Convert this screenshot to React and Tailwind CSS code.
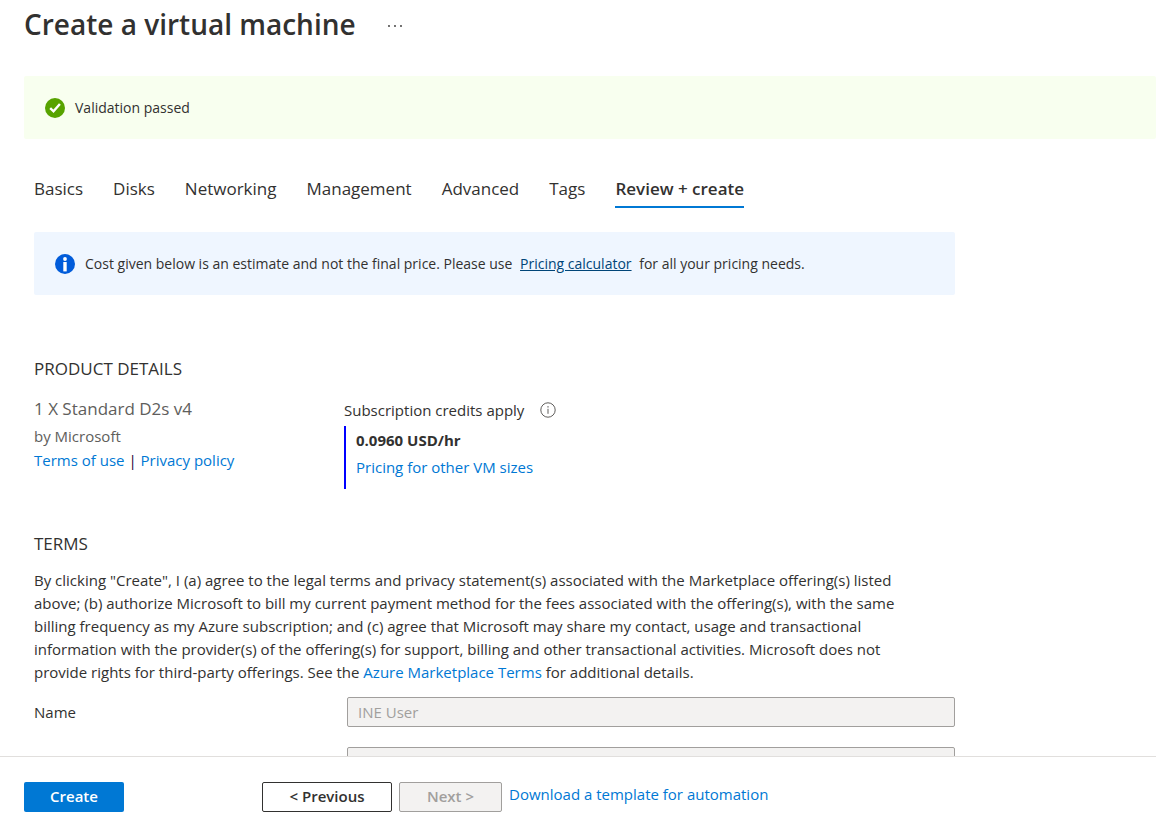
const tabs = ["Basics", "Disks", "Networking", "Management", "Advanced", "Tags", "Review + create"];

function CheckBadge() {
  return (
    <svg viewBox="0 0 20 20" className="size-5 shrink-0" aria-hidden="true">
      <circle cx="10" cy="10" r="10" fill="#57a300" />
      <path d="M5.2 10.2 8.5 13.3 14.9 6" fill="none" stroke="#fff" strokeWidth="2.4" />
    </svg>
  );
}

function InfoBadge() {
  return (
    <svg viewBox="0 0 20 20" className="size-5 shrink-0" aria-hidden="true">
      <circle cx="10" cy="10" r="10" fill="#015cda" />
      <circle cx="10" cy="5" r="1.9" fill="#fff" />
      <rect x="8.3" y="8" width="3.4" height="9.4" fill="#fff" />
    </svg>
  );
}

function InfoOutline() {
  return (
    <svg viewBox="0 0 16 16" className="size-4 shrink-0" aria-hidden="true">
      <circle cx="8" cy="8" r="7.2" fill="none" stroke="#605e5c" strokeWidth="1" />
      <rect x="7.5" y="6.8" width="1" height="5" fill="#605e5c" />
      <rect x="7.4" y="4.2" width="1.2" height="1.3" fill="#605e5c" />
    </svg>
  );
}

const field = "h-[30px] min-w-0 flex-1 rounded-xs border border-[#a19f9d] bg-[#f3f2f1] px-2.5 text-[15px] text-[#a19f9d]";
const link = "text-[#0078d4] hover:underline";

export default function App() {
  return (
    <div className="flex h-screen flex-col bg-white font-['Open_Sans',sans-serif] text-[15px] text-[#323130]">
      <main className="min-h-0 flex-1 overflow-hidden pl-6">
        <header className="flex h-[76px] items-start gap-8 pt-1">
          <h1 className="text-[28px] leading-10 font-semibold">Create a virtual machine</h1>
          <button type="button" aria-label="More options" className="flex h-11 items-center">
            <svg viewBox="0 0 16 4" className="h-1 w-4" fill="#323130" aria-hidden="true">
              <circle cx="1" cy="2" r="0.9" />
              <circle cx="7" cy="2" r="0.9" />
              <circle cx="13" cy="2" r="0.9" />
            </svg>
          </button>
        </header>

        <div role="status" className="flex h-[63px] items-center gap-2.5 rounded-xs bg-[#f8ffef] px-[21px] text-sm">
          <CheckBadge />
          <span>Validation passed</span>
        </div>

        <div className="max-w-[931px] pl-2.5">
          <nav className="flex gap-[30px] pt-8 text-[17px] leading-8">
            {tabs.map((tab) => (
              <button
                key={tab}
                type="button"
                className={
                  tab === "Review + create"
                    ? "h-[37px] border-b-2 border-[#0078d4] font-semibold"
                    : "h-[37px] border-b-2 border-transparent"
                }
              >
                {tab}
              </button>
            ))}
          </nav>

          <div className="mt-6 flex h-[63px] items-center gap-2.5 rounded-xs bg-[#eff6ff] px-[21px] text-sm">
            <InfoBadge />
            <p>
              Cost given below is an estimate and not the final price. Please use{" "}
              <a href="#calculator" className="mx-1 text-[#004578] underline">Pricing calculator</a>{" "}
              for all your pricing needs.
            </p>
          </div>

          <section className="mt-[62px]">
            <h2 className="text-[17px] leading-6">PRODUCT DETAILS</h2>
            <div className="mt-4 flex">
              <div className="w-[310px] text-[#605e5c]">
                <p className="text-[17px] leading-6">1 X Standard D2s v4</p>
                <p className="mt-[3px] leading-6">by Microsoft</p>
                <p className="leading-6">
                  <a href="#terms" className={link}>Terms of use</a>
                  <span className="text-[#1b0033]"> | </span>
                  <a href="#privacy" className={link}>Privacy policy</a>
                </p>
              </div>
              <div>
                <p className="flex h-[29px] items-center gap-4 pb-[3px]">
                  Subscription credits apply <InfoOutline />
                </p>
                <div className="h-[63px] border-l-2 border-[#0000ff] pt-px pl-2.5 leading-[27px]">
                  <p className="font-bold">0.0960 USD/hr</p>
                  <a href="#sizes" className={link}>Pricing for other VM sizes</a>
                </div>
              </div>
            </div>
          </section>

          <section className="mt-[43px]">
            <h2 className="text-[17px] leading-6">TERMS</h2>
            <p className="mt-[13px] pr-8 leading-[23px]">
              By clicking "Create", I (a) agree to the legal terms and privacy statement(s) associated with the
              Marketplace offering(s) listed above; (b) authorize Microsoft to bill my current payment method for the
              fees associated with the offering(s), with the same billing frequency as my Azure subscription; and (c)
              agree that Microsoft may share my contact, usage and transactional information with the provider(s) of
              the offering(s) for support, billing and other transactional activities. Microsoft does not provide
              rights for third-party offerings. See the{" "}
              <a href="#marketplace" className={link}>Azure Marketplace Terms</a> for additional details.
            </p>
            <div className="mt-[13px] flex items-center">
              <label htmlFor="name" className="w-[313px]">Name</label>
              <input id="name" disabled defaultValue="INE User" className={field} />
            </div>
            <div className="mt-5 flex items-center pl-[313px]">
              <input aria-label="Preferred e-mail address" disabled className={field} />
            </div>
          </section>
        </div>
      </main>

      <footer className="flex h-[74px] shrink-0 items-center border-t border-[#e1dfdd] px-6 pt-1.5 font-semibold">
        <button type="button" className="h-[30px] w-[100px] rounded-xs bg-[#0078d4] text-white">Create</button>
        <button type="button" className="ml-[138px] h-[30px] w-[130px] rounded-xs border border-[#323130]">
          &lt; Previous
        </button>
        <button type="button" disabled className="ml-[7px] h-[30px] w-[103px] rounded-xs border border-[#a19f9d] bg-[#f3f2f1] text-[#a19f9d]">
          Next &gt;
        </button>
        <a href="#template" className="ml-[7px] pb-1 font-normal text-[#0078d4] hover:underline">
          Download a template for automation
        </a>
      </footer>
    </div>
  );
}
